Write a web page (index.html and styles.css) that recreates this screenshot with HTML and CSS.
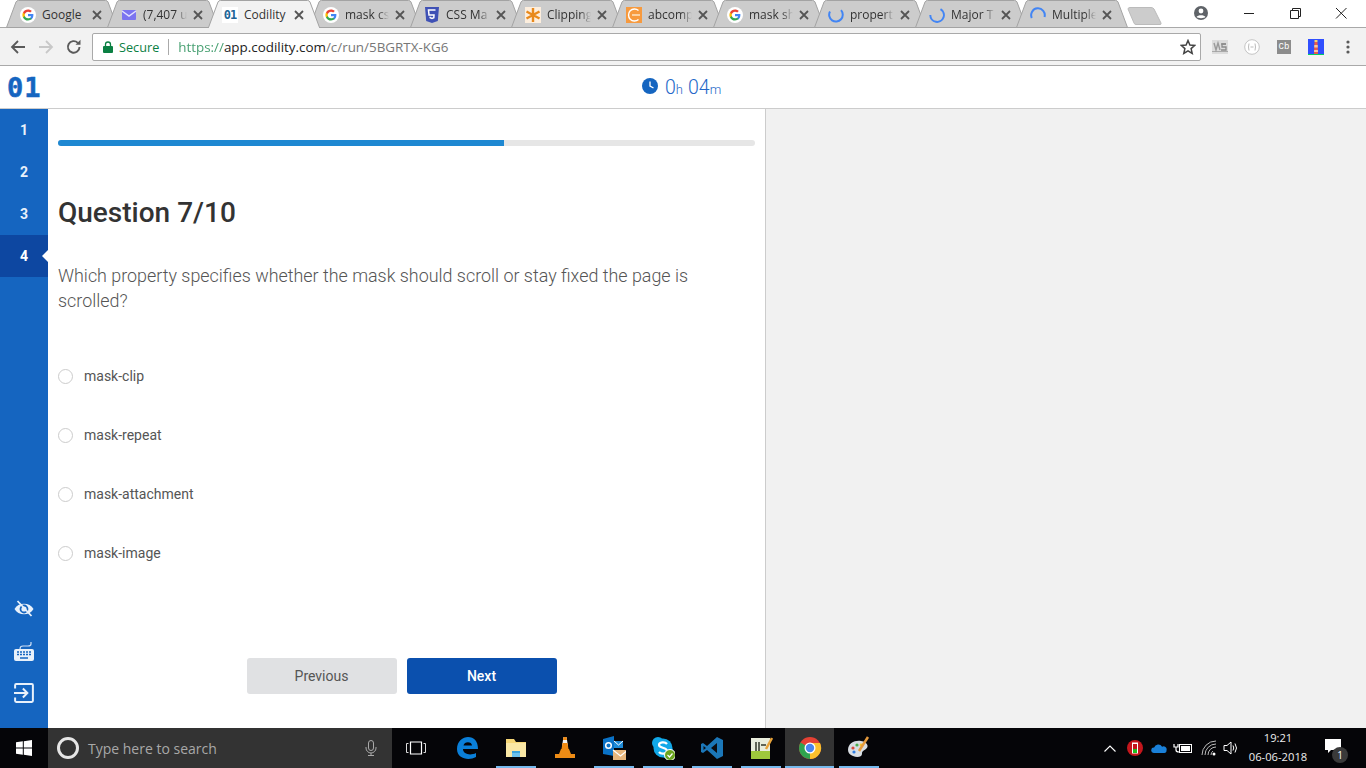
FILE: index.html
```html
<!DOCTYPE html>
<html>
<head>
<meta charset="utf-8">
<title>Codility</title>
<link rel="stylesheet" href="styles.css">
</head>
<body>
<svg class="defs" width="0" height="0">
	<symbol id="tab-shape" viewBox="0 0 112 28" preserveAspectRatio="none">
		<path d="M0.5 27.500 L10 2 Q10.700 0.500 12.500 0.500 L99.500 0.500 Q101.300 0.500 102 2 L111.500 27.500 Z"/>
	</symbol>
	<symbol id="close-x" viewBox="0 0 10 10">
		<path d="M1 1 L9 9 M9 1 L1 9" fill="none" stroke="#555" stroke-width="1.800"/>
	</symbol>
	<symbol id="g-logo" viewBox="0 0 16 16">
		<circle cx="8" cy="8" r="8" fill="#fff"/>
		<path d="M13.400 8.100c0-.4 0-.8-.1-1.200H8v2.300h3.100c-.1.700-.5 1.300-1.100 1.700v1.400h1.800c1-1 1.600-2.400 1.600-4.200z" fill="#4285f4"/>
		<path d="M8 13.500c1.500 0 2.800-.5 3.800-1.400L10 10.700c-.5.300-1.200.6-2 .6-1.500 0-2.700-1-3.100-2.300H3v1.400c.9 1.900 2.800 3.100 5 3.100z" fill="#34a853"/>
		<path d="M4.900 9c-.2-.7-.2-1.400 0-2V5.600H3c-.8 1.500-.8 3.300 0 4.800L4.900 9z" fill="#fbbc05"/>
		<path d="M8 4.700c.8 0 1.600.3 2.200.9l1.600-1.600C10.800 3 9.400 2.500 8 2.500c-2.200 0-4.100 1.200-5 3.100L4.900 7C5.300 5.700 6.500 4.700 8 4.700z" fill="#ea4335"/>
	</symbol>
</svg>

<div class="tabstrip">
	<div class="tab"><svg class="tab-bg"><use href="#tab-shape"/></svg><svg class="fav"><use href="#g-logo"/></svg><span class="tab-title">Google</span><svg class="tab-x"><use href="#close-x"/></svg></div>
	<div class="tab"><svg class="tab-bg"><use href="#tab-shape"/></svg><svg class="fav" viewBox="0 0 16 16"><rect x="1" y="3" width="14" height="10" rx="1" fill="#7b74f0"/><path d="M1 4 L8 9 L15 4" fill="none" stroke="#e3e1ff" stroke-width="1.500"/></svg><span class="tab-title fade">(7,407 u</span><svg class="tab-x"><use href="#close-x"/></svg></div>
	<div class="tab tab-active"><svg class="tab-bg"><use href="#tab-shape"/></svg><span class="fav fav-01">01</span><span class="tab-title">Codility</span><svg class="tab-x"><use href="#close-x"/></svg></div>
	<div class="tab"><svg class="tab-bg"><use href="#tab-shape"/></svg><svg class="fav"><use href="#g-logo"/></svg><span class="tab-title fade">mask cs</span><svg class="tab-x"><use href="#close-x"/></svg></div>
	<div class="tab"><svg class="tab-bg"><use href="#tab-shape"/></svg><svg class="fav" viewBox="0 0 16 16"><path d="M1 0 H15 L13.800 14 L8 16 L2.200 14 Z" fill="#3f51b5"/><path d="M11.500 3 H4.500 L5 8 H10 L9.800 10.800 L8 11.400 L6.200 10.800 L6.100 9.800" fill="none" stroke="#fff" stroke-width="1.500"/></svg><span class="tab-title fade">CSS Ma</span><svg class="tab-x"><use href="#close-x"/></svg></div>
	<div class="tab"><svg class="tab-bg"><use href="#tab-shape"/></svg><svg class="fav" viewBox="0 0 16 16"><rect width="16" height="16" fill="#fdeedd"/><path d="M8 1 V15 M1.500 4.500 L14.500 11.500 M14.500 4.500 L1.500 11.500" stroke="#e8891c" stroke-width="2.400"/></svg><span class="tab-title fade">Clipping</span><svg class="tab-x"><use href="#close-x"/></svg></div>
	<div class="tab"><svg class="tab-bg"><use href="#tab-shape"/></svg><svg class="fav" viewBox="0 0 16 16"><rect width="16" height="16" fill="#f79a3e"/><path d="M12.500 3.500 A6 6 0 1 0 12.500 12.500" fill="none" stroke="#fff" stroke-width="1.400"/><path d="M6 8 H14" stroke="#fde3c4" stroke-width="1.500"/></svg><span class="tab-title fade">abcomp</span><svg class="tab-x"><use href="#close-x"/></svg></div>
	<div class="tab"><svg class="tab-bg"><use href="#tab-shape"/></svg><svg class="fav"><use href="#g-logo"/></svg><span class="tab-title fade">mask sh</span><svg class="tab-x"><use href="#close-x"/></svg></div>
	<div class="tab"><svg class="tab-bg"><use href="#tab-shape"/></svg><svg class="fav" viewBox="0 0 16 16"><path d="M2 4.500 A6.800 6.800 0 1 0 13 3.200" fill="none" stroke="#4285f4" stroke-width="2"/></svg><span class="tab-title fade">propert</span><svg class="tab-x"><use href="#close-x"/></svg></div>
	<div class="tab"><svg class="tab-bg"><use href="#tab-shape"/></svg><svg class="fav" viewBox="0 0 16 16"><path d="M1.300 8 A6.800 6.800 0 1 0 11.500 2.200" fill="none" stroke="#4285f4" stroke-width="2"/></svg><span class="tab-title fade">Major T</span><svg class="tab-x"><use href="#close-x"/></svg></div>
	<div class="tab"><svg class="tab-bg"><use href="#tab-shape"/></svg><svg class="fav" viewBox="0 0 16 16"><path d="M1.800 11 A6.800 6.800 0 1 1 14.500 10" fill="none" stroke="#4285f4" stroke-width="2"/></svg><span class="tab-title fade">Multiple</span><svg class="tab-x"><use href="#close-x"/></svg></div>
	<svg class="new-tab" viewBox="0 0 35 18"><path d="M1 2 Q1 0.500 3 0.500 H24 Q26 0.500 27 2 L34 16 Q34.500 17.500 33 17.500 H9 Q7.500 17.500 7 16 Z" fill="#ccc" stroke="#bbb"/></svg>
	<div class="win-controls">
		<svg class="win-avatar" viewBox="0 0 16 16"><circle cx="8" cy="8" r="7" fill="#5f6368"/><circle cx="8" cy="6" r="2.400" fill="#fff"/><path d="M3.500 12 C5 9.500 11 9.500 12.500 12 C11 13.500 5 13.500 3.500 12 Z" fill="#fff"/></svg>
		<svg class="win-btn" viewBox="0 0 46 26"><path d="M18 13.500 H28" stroke="#222"/></svg>
		<svg class="win-btn" viewBox="0 0 46 26"><path d="M18.500 10.500 H26.500 V18.500 H18.500 Z M20.500 10.500 V8.500 H28.500 V16.500 H26.500" fill="none" stroke="#222"/></svg>
		<svg class="win-btn" viewBox="0 0 46 26"><path d="M18 8 L28.500 18.500 M28.500 8 L18 18.500" stroke="#222"/></svg>
	</div>
</div>

<div class="toolbar">
	<svg class="nav-icon" viewBox="0 0 16 16"><path d="M15 8 H2 M8 2 L2 8 L8 14" fill="none" stroke="#5a5a5a" stroke-width="1.800"/></svg>
	<svg class="nav-icon" viewBox="0 0 16 16"><path d="M1 8 H14 M8 2 L14 8 L8 14" fill="none" stroke="#c8c8c8" stroke-width="1.800"/></svg>
	<svg class="nav-icon" viewBox="0 0 16 16"><path d="M13.500 8 A5.800 5.800 0 1 1 11.800 3.800" fill="none" stroke="#5a5a5a" stroke-width="1.900"/><path d="M9.500 5.800 H14.500 V0.800 Z" fill="#5a5a5a"/></svg>
	<div class="omnibox">
		<svg class="lock" viewBox="0 0 10 12"><path d="M2.500 5 V3.500 A2.500 2.500 0 0 1 7.500 3.500 V5" fill="none" stroke="#0b8043" stroke-width="1.300"/><rect y="5" width="10" height="7" rx="1" fill="#0b8043"/></svg>
		<span class="secure">Secure</span>
		<span class="omni-div"></span>
		<span class="url"><span class="url-scheme">https://</span><span class="url-host">app.codility.com</span>/c/run/5BGRTX-KG6</span>
		<svg class="star" viewBox="0 0 16 16"><path d="M8 1.500 L9.900 6 L14.800 6.400 L11.100 9.600 L12.200 14.400 L8 11.800 L3.800 14.400 L4.900 9.600 L1.200 6.400 L6.100 6 Z" fill="none" stroke="#444" stroke-width="1.500"/></svg>
	</div>
	<div class="extensions">
		<svg class="ext" viewBox="0 0 16 16"><rect y="1" width="16" height="14" fill="#dcdcdc"/><rect y="12" width="16" height="1" fill="#aaa"/><path d="M2 4 L4 11 L6 4 L8 11 M9 5 H14" fill="none" stroke="#9a9a9a" stroke-width="1.400"/><path d="M14 5 H10 V8 H14 V11 H9" fill="none" stroke="#8a8a8a" stroke-width="1.300"/></svg>
		<svg class="ext" viewBox="0 0 16 16"><circle cx="8" cy="8" r="7.300" fill="#fff" stroke="#c4c4c4"/><path d="M5 4.500 Q4 8 5 11.500 M11 4.500 Q12 8 11 11.500 M6.500 8 H9.500" fill="none" stroke="#bbb"/></svg>
		<span class="ext ext-cb">Cb</span>
		<svg class="ext" viewBox="0 0 16 16"><rect width="16" height="16" fill="#304ffe"/><rect y="15" width="16" height="1" fill="#0c6"/><path d="M6.500 3 H9.500 L10 15 H6 Z" fill="#ec5c48"/><path d="M6.300 6 H9.700 L9.800 8.500 H6.200 Z M6.100 11 H9.900 L10 13 H6 Z" fill="#f5c9a0"/><rect x="6.500" y="1" width="3" height="2" fill="#f8d36a"/></svg>
		<svg class="ext ext-dots" viewBox="0 0 4 16"><circle cx="2" cy="3" r="1.600" fill="#5a5a5a"/><circle cx="2" cy="8" r="1.600" fill="#5a5a5a"/><circle cx="2" cy="13" r="1.600" fill="#5a5a5a"/></svg>
	</div>
</div>

<header class="app-header">
	<div class="app-logo">01</div>
	<div class="timer">
		<svg class="timer-icon" viewBox="0 0 16 16"><circle cx="8" cy="8" r="8" fill="#1565c0"/><path d="M8 3.500 V8 L11.500 10" fill="none" stroke="#fff" stroke-width="1.300"/></svg>
		<span class="timer-num">0</span><span class="timer-unit">h</span>
		<span class="timer-num timer-gap">04</span><span class="timer-unit">m</span>
	</div>
</header>

<div class="app-body">
	<nav class="sidebar">
		<ul class="steps">
			<li>1</li>
			<li>2</li>
			<li>3</li>
			<li class="current">4</li>
		</ul>
		<div class="side-tools">
			<svg viewBox="0 0 20 20"><path d="M0.500 10 C4 3 16 3 19.500 10 C16 17 4 17 0.500 10 Z" fill="#e8f1fb"/><circle cx="10" cy="10" r="4.400" fill="#1565c0"/><circle cx="10" cy="10" r="2.600" fill="#e8f1fb"/><path d="M3.500 2 L17.500 17" stroke="#e8f1fb" stroke-width="1.800"/></svg>
			<svg viewBox="0 0 20 20"><path d="M17 1 V3 Q17 5 14 5 H9 Q6 5 6 8" fill="none" stroke="#cfe0f5" stroke-width="1.200"/><rect y="8" width="20" height="12" rx="2" fill="#e8f1fb"/><path d="M3 11 H17 M3 13.500 H17" stroke="#1565c0" stroke-width="1.500" stroke-dasharray="2 1"/><path d="M6 17 H14" stroke="#1565c0" stroke-width="1.500"/></svg>
			<svg viewBox="0 0 18 18"><path d="M1 5 V2 Q1 1 2 1 H16 Q17 1 17 2 V16 Q17 17 16 17 H2 Q1 17 1 16 V13" fill="none" stroke="#e8f1fb" stroke-width="1.800"/><path d="M0 9 H11 M8 5 L12 9 L8 13" fill="none" stroke="#e8f1fb" stroke-width="1.800"/></svg>
		</div>
	</nav>
	<main class="question-pane">
		<div class="progress"><div class="progress-fill"></div></div>
		<h1 class="q-title">Question 7/10</h1>
		<p class="q-text">Which property specifies whether the mask should scroll or stay fixed the page is scrolled?</p>
		<div class="options">
			<label class="option"><span class="radio"></span>mask-clip</label>
			<label class="option"><span class="radio"></span>mask-repeat</label>
			<label class="option"><span class="radio"></span>mask-attachment</label>
			<label class="option"><span class="radio"></span>mask-image</label>
		</div>
		<div class="q-buttons">
			<button class="btn btn-prev">Previous</button>
			<button class="btn btn-next">Next</button>
		</div>
	</main>
	<aside class="side-pane"></aside>
</div>

<footer class="taskbar">
	<div class="start"><svg viewBox="0 0 16 16"><path d="M0 2.300 L6.800 1.300 V7.500 H0 Z M7.800 1.200 L16 0 V7.500 H7.800 Z M0 8.500 H6.800 V14.700 L0 13.700 Z M7.800 8.500 H16 V16 L7.800 14.800 Z" fill="#fff"/></svg></div>
	<div class="search">
		<span class="cortana"></span>
		<span class="search-text">Type here to search</span>
		<svg class="mic" viewBox="0 0 12 16"><rect x="3.500" y="0.500" width="5" height="10" rx="2.500" fill="none" stroke="#aaa"/><path d="M1 7 V8 A5 5 0 0 0 11 8 V7 M6 13 V15.500 M3 15.500 H9" fill="none" stroke="#aaa"/></svg>
	</div>
	<div class="task-view"><svg viewBox="0 0 20 14"><path d="M4.500 1 H15.500 V13 H4.500 Z" fill="none" stroke="#fff" stroke-width="1.200"/><path d="M2.500 2.500 H0.500 V11.500 H2.500 M17.500 2.500 H19.500 V11.500 H17.500" fill="none" stroke="#ddd"/></svg></div>
	<div class="task-apps">
		<div class="app"><svg viewBox="0 0 24 24"><path d="M2 13 C2 5 8 1 13 1 C19 1 23 5 23 13 H8 C8 18 15 20 21 17 V21 C14 25 2 23 2 13 Z M8.500 9.500 H17 C17 5 9 5 8.500 9.500 Z" fill="#0a7fd8"/></svg></div>
		<div class="app app-on"><svg viewBox="0 0 24 24"><path d="M2 3 H10 L12 6 H22 V21 H2 Z" fill="#f6d676"/><rect x="2" y="7" width="20" height="14" fill="#fae7a5"/><path d="M8 21 V15 H16 V21 H14 V17 H10 V21 Z" fill="#3aa3dc"/><rect x="8" y="17" width="8" height="4" fill="#6cc1ec"/></svg></div>
		<div class="app"><svg viewBox="0 0 24 24"><path d="M10.500 1 H13.500 L15 10 H9 Z" fill="#f3f3f3"/><path d="M10.500 1 H13.500 L14 4 H10 Z M9.500 7 H14.500 L15.500 13 H8.500 Z" fill="#f08a12"/><path d="M8 13 H16 L18 18 H22 V22 H2 V18 H6 Z" fill="#ee8c15"/></svg></div>
		<div class="app app-on"><svg viewBox="0 0 24 24"><path d="M1 3 L12 0 V20 L1 18 Z" fill="#0a72c6"/><circle cx="6.500" cy="9.500" r="2.800" fill="none" stroke="#fff" stroke-width="1.500"/><rect x="12" y="5" width="9" height="7" fill="#1e8ad6"/><path d="M12 5 L16.500 9 L21 5" fill="none" stroke="#fff"/><rect x="11" y="14" width="15" height="10" fill="#e9b77c"/><path d="M11 14 L18.500 20 L26 14" fill="none" stroke="#fff" stroke-width="1.200"/></svg></div>
		<div class="app app-on"><svg viewBox="0 0 24 24"><circle cx="7" cy="7" r="6" fill="#11a8e8"/><circle cx="17" cy="17" r="6" fill="#11a8e8"/><circle cx="12" cy="12" r="9.500" fill="#11a8e8"/><path d="M16 8 C14 5.500 8 6 8 9 C8 12.500 16 11 16 15 C16 18 10 18.500 8 16" fill="none" stroke="#fff" stroke-width="2.200"/><circle cx="19" cy="19" r="5.500" fill="#6aa51e" stroke="#fff"/><path d="M16.500 19 L18.500 21 L21.500 17.500" fill="none" stroke="#fff" stroke-width="1.200"/></svg></div>
		<div class="app app-on"><svg viewBox="0 0 24 24"><path d="M17 1 L23 4 V20 L17 23 L7 14 L3 17 L1 16 V8 L3 7 L7 10 Z" fill="#1b77b8"/><path d="M17 7 V17 L11 12 Z M3.500 10 L6 12 L3.500 14 Z" fill="#0b0d12"/></svg></div>
		<div class="app app-on"><svg viewBox="0 0 24 24"><rect x="2" y="2" width="19" height="21" fill="#e9eddc"/><rect x="2" y="15" width="19" height="8" fill="#9ec93c"/><path d="M7 6 V15 M10 6 V15 M12 9 H17" stroke="#33382a" stroke-width="1.500"/><path d="M17 13 L23 2" stroke="#e8a33a" stroke-width="2.500"/></svg></div>
		<div class="app app-on app-current"><svg viewBox="0 0 24 24"><circle cx="12" cy="12" r="11" fill="#e44134"/><path d="M12 12 L2.500 6.500 A11 11 0 0 0 12 23 Z" fill="#2fa44f"/><path d="M12 7 H22 A11 11 0 0 1 12 23 Z" fill="#fbc02d"/><circle cx="12" cy="12" r="5.500" fill="#fff"/><circle cx="12" cy="12" r="4.200" fill="#4a85ef"/></svg></div>
		<div class="app app-on"><svg viewBox="0 0 24 24"><path d="M1 14 C1 7 8 4 14 5 C21 6 22 11 19 13 C16 15 15 15 15 18 C15 21 10 22 6 20 C3 19 1 17 1 14 Z" fill="#d8dde2"/><circle cx="6" cy="12" r="1.600" fill="#d9483b"/><circle cx="10" cy="9" r="1.600" fill="#4caf50"/><circle cx="7" cy="16" r="1.600" fill="#2f7de1"/><circle cx="14" cy="9" r="1.400" fill="#f4c430"/><path d="M12 15 L21 1" stroke="#e59a3c" stroke-width="2.500"/></svg></div>
	</div>
	<div class="tray">
		<svg class="tray-chev" viewBox="0 0 12 7"><path d="M0.500 6.500 L6 1 L11.500 6.500" fill="none" stroke="#fff" stroke-width="1.100"/></svg>
		<svg class="tray-icon" viewBox="0 0 16 16"><circle cx="8" cy="8" r="8" fill="#c4161c"/><rect x="5" y="2.500" width="6" height="11" fill="#fff"/><rect x="6" y="4" width="4" height="5" fill="#c4161c"/><rect x="6" y="9" width="4" height="4" fill="#20c020"/></svg>
		<svg class="tray-icon tray-tight" viewBox="0 0 18 12"><path d="M3 11.500 A3 3 0 0 1 3.500 5.500 A5 5 0 0 1 12.500 4.500 A3.500 3.500 0 0 1 17.500 8.500 Q17.500 11.500 15 11.500 Z" fill="#1a80d8"/></svg>
		<svg class="tray-icon tray-wide" viewBox="0 0 20 12"><path d="M1 2 V5 H5 V2 M3 5 V8 Q3 10 6 10" fill="none" stroke="#fff" stroke-width="1.200"/><rect x="6.500" y="2.500" width="12" height="8" fill="none" stroke="#fff"/><rect x="8" y="4" width="9" height="5" fill="#fff"/></svg>
		<svg class="tray-icon tray-tight" viewBox="0 0 16 16"><path d="M1 15 A14 14 0 0 1 15 1 M4 15 A11 11 0 0 1 15 4 M7 15 A8 8 0 0 1 15 7 M10 15 A5 5 0 0 1 12 11" fill="none" stroke="#bbb"/><circle cx="13" cy="14" r="1.500" fill="#fff"/></svg>
		<svg class="tray-icon" viewBox="0 0 16 16"><path d="M1 5.500 H4 L8 2 V14 L4 10.500 H1 Z M10 5.500 Q11.500 8 10 10.500 M12 3.500 Q15 8 12 12.500" fill="none" stroke="#fff"/></svg>
		<div class="clock"><div>19:21</div><div>06-06-2018</div></div>
		<div class="notify">
			<svg viewBox="0 0 16 14"><path d="M0 0 H16 V11 H6 L3 14 V11 H0 Z" fill="#fff"/></svg>
			<span class="notify-badge">1</span>
		</div>
	</div>
</footer>
</body>
</html>
```

FILE: styles.css
```css
*{
	box-sizing:border-box;
}
html,body{
	margin:0;
	padding:0;
	height:100%;
	overflow:hidden;
}
body{
	width:1366px;
	height:768px;
	display:flex;
	flex-direction:column;
	font-family:Roboto,"Liberation Sans",sans-serif;
	background:#fff;
}
.defs{
	position:absolute;
}

/* browser chrome */
.tabstrip{
	height:28px;
	flex:none;
	display:flex;
	align-items:flex-start;
	padding-left:6px;
	background:linear-gradient(#a9a9a9,#a9a9a9) left bottom / 100% 1px no-repeat #fff;
}
.tab{
	width:112px;
	height:28px;
	flex:none;
	margin-right:-11px;
	position:relative;
	display:flex;
	align-items:center;
	padding-left:14px;
	padding-top:1px;
	font-family:"Open Sans","Noto Sans",sans-serif;
	font-size:12px;
	color:#333;
}
.tab-bg{
	position:absolute;
	left:0;
	top:0;
	width:112px;
	height:28px;
	fill:#ccc;
	stroke:#a3a3a3;
	stroke-width:1;
}
.tab-active{
	z-index:2;
}
.tab-active .tab-bg{
	fill:#f2f2f2;
}
.tab-active:after{
	content:"";
	position:absolute;
	left:1px;
	right:1px;
	bottom:0;
	height:1px;
	background:#f2f2f2;
}
.fav{
	width:16px;
	height:16px;
	flex:none;
	position:relative;
}
.fav-01{
	background:#fff;
	color:#1d6597;
	font:bold 12px "DejaVu Sans Mono",monospace;
	line-height:16px;
	text-align:center;
	letter-spacing:-1px;
}
.tab-title{
	width:44px;
	margin-left:6px;
	position:relative;
	white-space:nowrap;
}
.fade{
	-webkit-mask-image:linear-gradient(to right,#000 75%,transparent);
	mask-image:linear-gradient(to right,#000 75%,transparent);
}
.tab-x{
	width:10px;
	height:10px;
	margin-left:6px;
	flex:none;
	position:relative;
}
.new-tab{
	width:35px;
	height:18px;
	margin:7px 0 0 10px;
	flex:none;
}
.win-controls{
	margin-left:auto;
	padding-right:2px;
	display:flex;
	align-items:flex-start;
}
.win-avatar{
	width:16px;
	height:16px;
	margin:5px 17px 0 0;
}
.win-btn{
	width:46px;
	height:26px;
	margin-top:0;
}
.toolbar{
	height:38px;
	flex:none;
	display:flex;
	align-items:center;
	padding:0 0 0 10px;
	background:#f2f2f2;
	border-bottom:1px solid #a9a9a9;
	position:relative;
}
.nav-icon{
	width:16px;
	height:16px;
	margin-right:12px;
	flex:none;
}
.omnibox{
	width:1109px;
	height:28px;
	margin-left:-2px;
	display:flex;
	align-items:center;
	padding:0 4px 0 10px;
	background:#fff;
	border:1px solid #a9a9a9;
	border-radius:2px;
	font-family:"Open Sans","Noto Sans",sans-serif;
	font-size:13.400px;
}
.lock{
	width:10px;
	height:12px;
	flex:none;
}
.secure{
	margin-left:6px;
	font-size:12.700px;
	color:#0b8043;
}
.omni-div{
	width:1px;
	height:16px;
	margin:0 9px 0 9px;
	background:#aaa;
}
.url{
	color:#777;
}
.url-scheme{
	color:#0b8043;
	opacity:.75;
}
.url-host{
	color:#222;
}
.star{
	width:16px;
	height:16px;
	margin-left:auto;
}
.extensions{
	display:flex;
	align-items:center;
	margin-left:11px;
}
.ext{
	width:16px;
	height:16px;
	margin-right:16px;
	flex:none;
}
.ext-cb{
	width:14px;
	height:14px;
	margin-left:1px;
	margin-right:17px;
	background:#8c8c8c;
	color:#fff;
	font:9px/14px "Liberation Mono",monospace;
	text-align:center;
}
.ext-dots{
	width:4px;
	margin-left:6px;
	margin-right:0;
}

/* page header */
.app-header{
	height:43px;
	flex:none;
	display:flex;
	align-items:center;
	border-bottom:1px solid #ccc;
	position:relative;
}
.app-logo{
	width:642px;
	flex:none;
	padding-left:7px;
	color:#1565c0;
	font:bold 27px/1 "DejaVu Sans Mono",monospace;
	letter-spacing:1px;
	-webkit-text-stroke:.5px #1565c0;
}
.timer{
	display:flex;
	align-items:baseline;
	color:#2468c8;
	font-weight:300;
}
.timer-icon{
	width:16px;
	height:16px;
	margin-right:7px;
	align-self:center;
	position:relative;
	top:-1px;
}
.timer-num{
	font-size:19.500px;
}
.timer-gap{
	margin-left:5px;
}
.timer-unit{
	font-size:13px;
}

/* page body */
.app-body{
	height:619px;
	flex:none;
	display:flex;
}
.sidebar{
	width:48px;
	flex:none;
	display:flex;
	flex-direction:column;
	justify-content:space-between;
	background:#1565c0;
	padding-bottom:25px;
}
.steps{
	list-style:none;
	margin:0;
	padding:0;
}
.steps li{
	height:42px;
	line-height:42px;
	text-align:center;
	color:#e8f1fb;
	font-size:14px;
	font-weight:700;
	position:relative;
}
.steps li.current{
	background:#0d47a1;
	color:#fff;
}
.steps li.current:after{
	content:"";
	position:absolute;
	right:0;
	top:15px;
	border:6px solid transparent;
	border-left:0;
	border-right-color:#fff;
}
.side-tools{
	display:flex;
	flex-direction:column;
	align-items:center;
	gap:22px;
}
.side-tools svg{
	width:20px;
	height:20px;
	display:block;
}
.question-pane{
	width:717px;
	flex:none;
	padding:31px 10px 0 10px;
	display:flex;
	flex-direction:column;
	background:#fff;
}
.progress{
	height:6px;
	background:#e6e6e6;
	border-radius:3px;
	overflow:hidden;
}
.progress-fill{
	width:446px;
	height:100%;
	background:#1e88d2;
}
.q-title{
	margin:49px 0 0;
	font-size:28px;
	font-weight:500;
	line-height:36px;
	color:#333;
}
.q-text{
	margin:32px 0 0;
	font-size:17.900px;
	font-weight:300;
	line-height:25px;
	color:#555;
}
.options{
	margin-top:39px;
	display:flex;
	flex-direction:column;
}
.option{
	height:59px;
	display:flex;
	align-items:center;
	padding-bottom:11px;
	font-size:14px;
	color:#555;
}
.radio{
	width:15px;
	height:15px;
	margin-right:11px;
	border:1px solid #ccc;
	border-radius:50%;
	background:#fff;
}
.q-buttons{
	margin-top:70px;
	display:flex;
	justify-content:center;
	gap:10px;
	padding-right:10px;
}
.btn{
	width:150px;
	height:36px;
	border:0;
	border-radius:3px;
	padding:0 0 1px;
	font-family:Roboto,"Liberation Sans",sans-serif;
	font-size:14px;
}
.btn-prev{
	background:#e0e1e3;
	color:#555;
}
.btn-next{
	background:#0b50ae;
	color:#fff;
	font-weight:500;
}
.side-pane{
	flex:1;
	background:#f1f1f1;
	border-left:1px solid #ccc;
}

/* windows taskbar */
.taskbar{
	height:40px;
	flex:none;
	display:flex;
	align-items:stretch;
	background:#050508;
	color:#fff;
	font-family:"Open Sans","Noto Sans",sans-serif;
}
.start{
	width:48px;
	flex:none;
	display:flex;
	align-items:center;
	justify-content:center;
}
.start svg{
	width:16px;
	height:16px;
}
.search{
	width:344px;
	flex:none;
	display:flex;
	align-items:center;
	padding-left:9px;
	background:#333;
}
.cortana{
	width:22px;
	height:22px;
	border:3px solid #e6e6e6;
	border-radius:50%;
	flex:none;
}
.search-text{
	margin-left:9px;
	font-size:14px;
	color:#a8a8a8;
}
.mic{
	width:12px;
	height:16px;
	margin-left:auto;
	margin-right:15px;
}
.task-view{
	width:48px;
	flex:none;
	display:flex;
	align-items:center;
	justify-content:center;
}
.task-view svg{
	width:20px;
	height:14px;
}
.task-apps{
	display:flex;
	margin-left:2px;
}
.app{
	width:49px;
	flex:none;
	display:flex;
	align-items:center;
	justify-content:center;
}
.app svg{
	width:24px;
	height:24px;
}
.app-on{
	background:linear-gradient(#76b9ed,#76b9ed) center bottom / 40px 2px no-repeat;
}
.app-current{
	background:linear-gradient(#76b9ed,#76b9ed) center bottom / 100% 2px no-repeat #333;
}
.tray{
	margin-left:auto;
	display:flex;
	align-items:center;
	padding-right:17px;
}
.tray-chev{
	width:12px;
	height:7px;
	margin-right:11px;
}
.tray-icon{
	width:16px;
	height:16px;
	margin-right:8px;
}
.tray-tight{
	margin-right:6px;
}
.tray-wide{
	width:20px;
}
.clock{
	width:76px;
	margin-left:-7px;
	margin-bottom:2px;
	text-align:center;
	font-size:11.200px;
	line-height:19px;
	color:#eee;
}
.notify{
	width:32px;
	margin-left:1px;
	align-self:stretch;
	position:relative;
	display:flex;
	align-items:center;
	justify-content:center;
}
.notify svg{
	width:16px;
	height:14px;
	margin-bottom:4px;
}
.notify-badge{
	position:absolute;
	right:1px;
	top:19px;
	width:16px;
	height:16px;
	border-radius:50%;
	background:#3a3a3a;
	font-size:10px;
	line-height:16px;
	text-align:center;
}
```
